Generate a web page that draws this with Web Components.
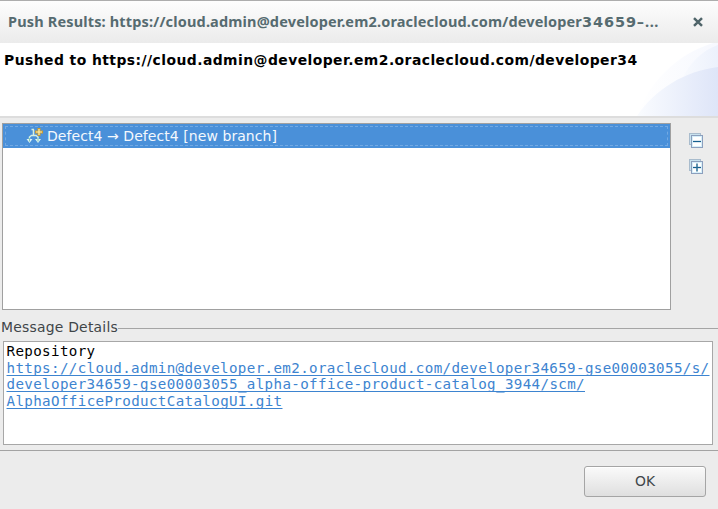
<!DOCTYPE html>
<html lang="en">
<head>
<meta charset="utf-8">
<title>Push Results</title>
<style>
html, body { margin: 0; width: 718px; height: 509px; overflow: hidden; background: #ececec; }
</style>
</head>
<body>
<push-dialog></push-dialog>
<script>
const define = (name, html, setup) => {
  const template = document.createElement('template');
  template.innerHTML = html;
  customElements.define(name, class extends HTMLElement {
    connectedCallback() {
      if (this.shadowRoot) return;
      this.attachShadow({ mode: 'open' }).append(template.content.cloneNode(true));
      if (setup) setup(this);
    }
  });
};

// One line of text whose tracking is set so that it takes the width given in "w".
define('fit-text', `<style>
:host { display: inline-block; white-space: pre; }
</style><slot></slot>`, el => {
  const natural = el.getBoundingClientRect().width;
  const n = el.textContent.length;
  el.style.letterSpacing = ((Number(el.getAttribute('w')) - natural) / n).toFixed(4) + 'px';
});

define('title-bar', `<style>
:host { display: flex; box-sizing: border-box; height: 43px; border-top: 1px solid #adadad; padding: 0 15px 0 8px;
  background: linear-gradient(#fdfdfd, #ebebeb); color: #566b70; align-items: center; justify-content: space-between;
  font: bold 14.5px/40px "Noto Sans", "Open Sans", sans-serif; }
.t { display: flex; align-items: baseline; height: 42px; }
.d { font: bold 14.5px/40px "DejaVu Sans", sans-serif; }
svg { display: block; }
</style>
<div class="t"><fit-text w="574">Push Results: https://cloud.admin@developer.em2.oraclecloud.com/developer</fit-text><fit-text class="d" w="63">34659–</fit-text><fit-text w="14">...</fit-text></div>
<svg width="10" height="10" viewBox="0 0 10 10"><path d="M1 1.2L9 8.8M9 1.2L1 8.8" stroke="#4f6469" stroke-width="2.5"/></svg>`);

define('dialog-header', `<style>
:host { display: flex; box-sizing: border-box; height: 73px; background: #fff; justify-content: space-between; }
.m { margin-left: 4px; color: #000; font: bold 13.9px/16px "DejaVu Sans", sans-serif; padding-top: 9px; }
svg { display: block; flex: none; margin-left: -4px; }
</style>
<div class="m"><fit-text w="633.5">Pushed to https://cloud.admin@developer.em2.oraclecloud.com/developer34</fit-text></div>
<svg width="81" height="73" viewBox="0 0 81 73">
<defs>
<linearGradient id="a" x1="0" x2="1"><stop offset="0" stop-color="#fff"/><stop offset="1" stop-color="#f6f8fe"/></linearGradient>
<linearGradient id="b" x1="0" x2="1"><stop offset="0" stop-color="#f8fafe"/><stop offset="1" stop-color="#ecf1fc"/></linearGradient>
<linearGradient id="c" x1="0" x2="1"><stop offset="0" stop-color="#fafcff"/><stop offset="1" stop-color="#dee5f8"/></linearGradient>
</defs>
<path d="M0 73C12 40 38 12 76 0H81V73Z" fill="url(#a)"/>
<path d="M45 36C53 20 64 8 81 2V36Z" fill="url(#b)"/>
<path d="M0 73C18 46 48 28 81 24V73Z" fill="url(#c)"/>
</svg>`);

define('branch-icon', `<style>:host { display: block; width: 17px; height: 16px; } svg { display: block; }</style>
<svg width="17" height="16" viewBox="0 0 17 16" fill="none">
<path d="M5.5 1.5H8M7.5 1.5V7.5M3.5 12V9L5.5 7.5H10L12 9V12" stroke="#d5efe0" stroke-width="1.5"/>
<path d="M0.5 11H6.5L3.5 15ZM9 11H15L12 15Z" fill="#dff5f4"/>
<path d="M3.5 10V13.5M12 10V13.5" stroke="#83c7b2"/>
<path d="M13 0V8M9 4H17" stroke="#c79a32" stroke-width="3"/>
<path d="M13 1V7M10 4H16" stroke="#fff3b0" stroke-width="1.2"/>
</svg>`);

define('result-row', `<style>
:host { display: flex; box-sizing: border-box; height: 24px; padding: 0 0 0 21px; background: #4a90d9;
  color: #f4f8fd; align-items: center; gap: 4px; outline: 1px dashed #72a9e3; outline-offset: -3px;
  font: 14px/22px "DejaVu Sans", sans-serif; }
branch-icon { margin-left: 2px; }
</style><branch-icon></branch-icon><slot></slot>`);

define('result-list', `<style>
:host { display: block; box-sizing: border-box; width: 669px; height: 187px; background: #fff; border: 1px solid #a0a0a0; }
</style><slot></slot>`);

define('tree-button', `<style>:host { display: block; width: 15px; height: 15px; } svg { display: block; }
.v { display: none; } :host([expand]) .v { display: block; }</style>
<svg width="15" height="15" viewBox="0 0 15 15">
<rect x="1.5" y=".5" width="11" height="11" fill="#c8e2ee" stroke="#a9bccd"/>
<rect x="3.5" y="2.5" width="11" height="12" fill="#fff" stroke="#8c9fbd"/>
<rect x="4.5" y="3.5" width="9" height="10" fill="#fff" stroke="#d6effa"/>
<path d="M5 8.5H13" stroke="#155f8f" stroke-width="1.3"/><path class="v" d="M9 4.5V12.5" stroke="#2b7196" stroke-width="1.5"/>
</svg>`);

define('group-title', `<style>
:host { display: flex; height: 17px; margin-top: 9px; padding-left: 1px; align-items: center; color: #3f4548; font: 13.9px/17px "DejaVu Sans", sans-serif; }
:host::after { content: ""; flex: 1; height: 1px; background: #a5a5a5; margin-top: 1px; }
</style><slot></slot>`);

define('message-details', `<style>
:host { display: block; box-sizing: border-box; width: 710px; height: 104px; margin: 5px 0 0 3px; padding: 1px 0 0 2.5px;
  background: #fff; border: 1px solid #a7a7a7; color: #000; font: 14.2px/16px "DejaVu Sans Mono", monospace; }
div { height: 16.67px; }
a { color: #3d84d0; text-decoration: underline; text-decoration-thickness: 1px; text-underline-offset: 2px; text-decoration-skip-ink: none; }
</style>
<div><fit-text w="89">Repository</fit-text></div>
<div><a><fit-text w="703">https://cloud.admin@developer.em2.oraclecloud.com/developer34659-gse00003055/s/</fit-text></a></div>
<div><a><fit-text w="578.5">developer34659-gse00003055_alpha-office-product-catalog_3944/scm/</fit-text></a></div>
<div><a><fit-text w="276">AlphaOfficeProductCatalogUI.git</fit-text></a></div>`, el => {
  for (const a of el.shadowRoot.querySelectorAll('a fit-text')) a.style.textDecoration = 'inherit';
});

define('push-button', `<style>
:host { display: block; box-sizing: border-box; width: 122px; height: 31px; border: 1px solid #a5a5a5; border-radius: 3px;
  background: linear-gradient(#fafafa, #dfdfdf); color: #40474a; text-align: center; box-shadow: inset 0 1px #fff;
  font: 13.9px/29px "DejaVu Sans", sans-serif; }
</style><slot></slot>`);

define('push-dialog', `<style>
:host { display: flex; flex-direction: column; width: 718px; height: 509px; background: #ececec; }
.sep { height: 2px; background: #dddddd; }
.body { display: flex; padding: 5px 0 0 2px; }
.tools { padding: 10px 0 0 17px; display: grid; gap: 11px; align-content: start; }
.foot { display: flex; justify-content: flex-end; box-sizing: border-box; height: 59px; margin-top: 5px; border-top: 1px solid #a3a3a3; padding: 15px 12px 0 0; }
</style>
<title-bar></title-bar>
<dialog-header></dialog-header>
<div class="sep"></div>
<div class="body">
<result-list><result-row><fit-text w="230">Defect4 → Defect4 [new branch]</fit-text></result-row></result-list>
<div class="tools"><tree-button></tree-button><tree-button expand></tree-button></div>
</div>
<group-title><fit-text w="117">Message Details</fit-text></group-title>
<message-details></message-details>
<div class="foot"><push-button>OK</push-button></div>`);
</script>
</body>
</html>
